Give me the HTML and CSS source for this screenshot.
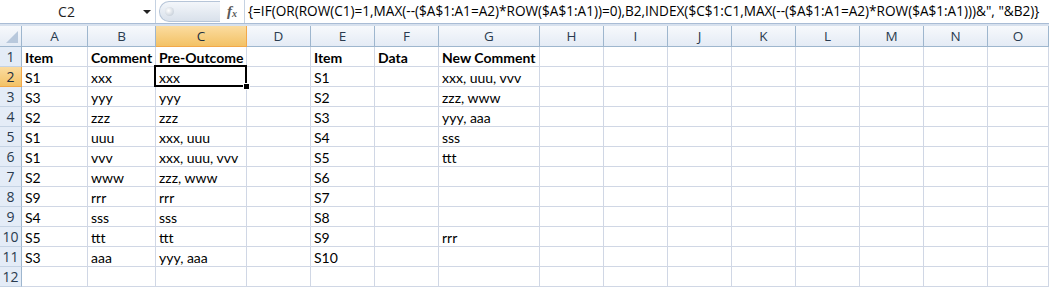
FILE: index.html
```html
<!DOCTYPE html>
<html lang="en">
<head>
    <meta charset="UTF-8">
    <title>Book1 - Sheet1</title>
    <link rel="stylesheet" href="styles.css">
</head>
<body>
    <div class="formula-bar">
        <div class="name-box">
            <span class="name-value">C2</span>
            <span class="name-arrow"></span>
        </div>
        <div class="fx-area">
            <span class="pill"><span class="pill-dot"></span></span>
            <span class="fx">f<sub>x</sub></span>
        </div>
        <div class="formula-text">{=IF(OR(ROW(C1)=1,MAX(--($A$1:A1=A2)*ROW($A$1:A1))=0),B2,INDEX($C$1:C1,MAX(--($A$1:A1=A2)*ROW($A$1:A1)))&amp;", "&amp;B2)}</div>
    </div>
    <div class="band"></div>

    <div class="sheet" id="sheet"></div>

    <script>
        const cols = ['A','B','C','D','E','F','G','H','I','J','K','L','M','N','O'];
        const data = [
            ['Item', 'Comment', 'Pre-Outcome', '', 'Item', 'Data', 'New Comment'],
            ['S1', 'xxx', 'xxx', '', 'S1', '', 'xxx, uuu, vvv'],
            ['S3', 'yyy', 'yyy', '', 'S2', '', 'zzz, www'],
            ['S2', 'zzz', 'zzz', '', 'S3', '', 'yyy, aaa'],
            ['S1', 'uuu', 'xxx, uuu', '', 'S4', '', 'sss'],
            ['S1', 'vvv', 'xxx, uuu, vvv', '', 'S5', '', 'ttt'],
            ['S2', 'www', 'zzz, www', '', 'S6', '', ''],
            ['S9', 'rrr', 'rrr', '', 'S7', '', ''],
            ['S4', 'sss', 'sss', '', 'S8', '', ''],
            ['S5', 'ttt', 'ttt', '', 'S9', '', 'rrr'],
            ['S3', 'aaa', 'yyy, aaa', '', 'S10', '', ''],
            ['', '', '', '', '', '', '']
        ];

        const sheet = document.getElementById('sheet');

        const corner = document.createElement('div');
        corner.className = 'hdr corner';
        sheet.appendChild(corner);

        cols.forEach(c => {
            const h = document.createElement('div');
            h.className = 'hdr col-hdr' + (c === 'C' ? ' active' : '');
            h.textContent = c;
            sheet.appendChild(h);
        });

        data.forEach((row, r) => {
            const rh = document.createElement('div');
            rh.className = 'hdr row-hdr' + (r === 1 ? ' active' : '');
            rh.textContent = r + 1;
            sheet.appendChild(rh);

            cols.forEach((c, i) => {
                const cell = document.createElement('div');
                cell.className = 'cell';
                if (r === 0) cell.classList.add('bold');
                if (r === 1 && c === 'C') cell.classList.add('selected');
                cell.textContent = row[i] || '';
                sheet.appendChild(cell);
            });
        });
    </script>
</body>
</html>
```

FILE: styles.css
```css
body {
    margin: 0;
    background: #ffffff;
    font-family: "Open Sans", "Liberation Sans", sans-serif;
    overflow: hidden;
}

.formula-bar {
    display: flex;
    height: 23px;
    background: #ffffff;
    border-bottom: 1px solid #a9bcd5;
}
.name-box {
    width: 155px;
    display: flex;
    align-items: center;
    border-right: 1px solid #c5d2e2;
}
.name-value {
    flex: 1;
    text-align: center;
    font-size: 14px;
    color: #1f1f1f;
    padding-right: 10px;
}
.name-arrow {
    width: 0;
    height: 0;
    border-left: 4px solid transparent;
    border-right: 4px solid transparent;
    border-top: 4px solid #222;
    margin-right: 4px;
}
.fx-area {
    width: 88px;
    display: flex;
    align-items: center;
    justify-content: space-between;
    background: #ffffff;
}
.pill {
    width: 60px;
    height: 19px;
    margin-left: 3px;
    border-radius: 10px 0 0 10px;
    background: linear-gradient(#f3f6fa, #d9e1eb);
    border: 1px solid #b6c5d8;
    border-right: none;
    display: flex;
    align-items: center;
}
.pill-dot {
    width: 9px;
    height: 9px;
    margin-left: 5px;
    border-radius: 50%;
    background: radial-gradient(circle at 40% 40%, #ffffff, #b7c2cf);
}
.fx {
    font-family: "Liberation Serif", serif;
    font-style: italic;
    font-weight: bold;
    font-size: 15px;
    color: #5a5a5a;
    margin-right: 7px;
    line-height: 1;
}
.fx sub {
    font-size: 10px;
    vertical-align: -1px;
}
.formula-text {
    flex: 1;
    border-left: 1px solid #c5d2e2;
    padding-left: 3px;
    font-size: 13.6px;
    line-height: 22px;
    color: #000;
    white-space: nowrap;
    overflow: hidden;
}

.band {
    height: 2px;
    background: #d7e1ee;
}

.sheet {
    display: grid;
    grid-template-columns: 22px 66px 68px 91px 64px 64px 64px 101px 64px 64px 64px 64px 64px 64px 64px 61px;
    grid-template-rows: 21px repeat(12, 20px);
}

.hdr {
    box-sizing: border-box;
    background: linear-gradient(#f7f9fc, #e4ebf5);
    color: #2a3b4f;
    font-size: 13.5px;
    display: flex;
    align-items: center;
    justify-content: center;
}
.corner {
    border-right: 1px solid #9eb6ce;
    border-bottom: 1px solid #9eb6ce;
    position: relative;
}
.corner::after {
    content: "";
    position: absolute;
    right: 3px;
    bottom: 3px;
    width: 0;
    height: 0;
    border-left: 12px solid transparent;
    border-bottom: 12px solid #b8c8dc;
}
.col-hdr {
    border-right: 1px solid #9eb6ce;
    border-bottom: 1px solid #9eb6ce;
}
.row-hdr {
    background: #e4ecf7;
    border-right: 1px solid #9eb6ce;
    border-bottom: 1px solid #c5d3e4;
    font-size: 14px;
}
.hdr.active {
    background: linear-gradient(#fbdca0, #f3c266);
    border-color: #f2a84a;
    color: #1f2f3f;
}

.cell {
    box-sizing: border-box;
    border-right: 1px solid #d0d7e5;
    border-bottom: 1px solid #d0d7e5;
    font-family: Lato, "Open Sans", sans-serif;
    font-size: 14px;
    color: #000;
    padding: 2px 0 0 3px;
    line-height: 17px;
    white-space: nowrap;
}
.bold {
    font-weight: bold;
}
.selected {
    position: relative;
}
.selected::after {
    content: "";
    position: absolute;
    left: -2px;
    top: -2px;
    right: -1px;
    bottom: -1px;
    border: 2px solid #000;
    pointer-events: none;
}
.selected::before {
    content: "";
    position: absolute;
    right: -4px;
    bottom: -4px;
    width: 5px;
    height: 5px;
    background: #000;
    border: 1px solid #fff;
    z-index: 1;
}
```
